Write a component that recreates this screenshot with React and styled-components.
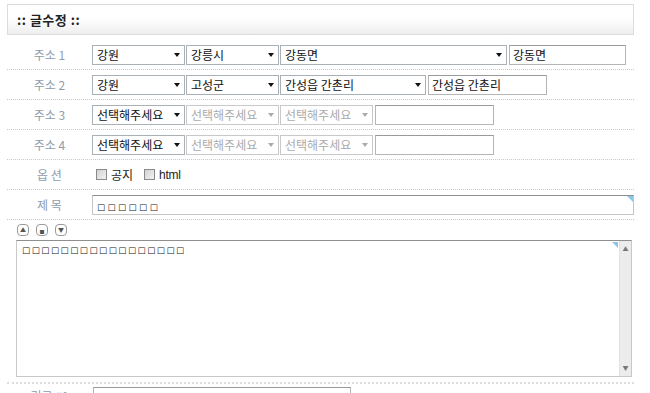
import React from 'react';
import styled, { createGlobalStyle } from 'styled-components';

const GlobalStyle = createGlobalStyle`
  body {
    margin: 0;
    background: #ffffff;
    font-family: 'Noto Sans CJK KR', 'Noto Sans', sans-serif;
    font-size: 12px;
    color: #333;
  }
`;

const addressRows = [
  { label: '주소 1', values: ['강원', '강릉시', '강동면'], widths: [93, 93, 227], input: '강동면', inputWidth: 117 },
  { label: '주소 2', values: ['강원', '고성군', '간성읍 간촌리'], widths: [93, 93, 146], input: '간성읍 간촌리', inputWidth: 119 },
  { label: '주소 3', values: ['선택해주세요', '선택해주세요', '선택해주세요'], widths: [93, 93, 93], input: '', inputWidth: 119, empty: true },
  { label: '주소 4', values: ['선택해주세요', '선택해주세요', '선택해주세요'], widths: [93, 93, 93], input: '', inputWidth: 119, empty: true },
];

const App = () => {
  return (
    <>
      <GlobalStyle />
      <Page>
        <TitleBox>
          <Title>:: 글수정 ::</Title>
        </TitleBox>

        <Form>
          {addressRows.map((row) => (
            <Row key={row.label}>
              <Label>{row.label}</Label>
              <Field>
                {row.values.map((v, i) => (
                  <SelectBox key={i} $width={row.widths[i]} $disabled={row.empty && i > 0}>
                    <SelectText>{v}</SelectText>
                    <Arrow $disabled={row.empty && i > 0} />
                  </SelectBox>
                ))}
                <TextInput $width={row.inputWidth}>{row.input}</TextInput>
              </Field>
            </Row>
          ))}

          <Row>
            <Label>옵 션</Label>
            <Field>
              <CheckLabel>
                <CheckBox />
                공지
              </CheckLabel>
              <CheckLabel $html>
                <CheckBox />
                html
              </CheckLabel>
            </Field>
          </Row>

          <Row>
            <Label>제 목</Label>
            <Field>
              <SubjectInput>
                <Tofu $spacing={2.5}>□□□□□□</Tofu>
                <CornerMark />
              </SubjectInput>
            </Field>
          </Row>
        </Form>

        <EditorTools>
          <ToolButton>▲</ToolButton>
          <ToolButton $small>■</ToolButton>
          <ToolButton>▼</ToolButton>
        </EditorTools>

        <TextArea>
          <TextContent>
            <Tofu $spacing={1.6}>□□□□□□□□□□□□□□□□□</Tofu>
          </TextContent>
          <CornerMark $inTextarea />
          <ScrollBar>
            <ScrollArrow>▲</ScrollArrow>
            <ScrollArrow>▼</ScrollArrow>
          </ScrollBar>
        </TextArea>

        <HeavySeparator />

        <Row $last>
          <Label>링크 #1</Label>
          <Field>
            <TextInput $width={258} />
          </Field>
        </Row>
      </Page>
    </>
  );
};

const Page = styled.div`
  width: 627px;
  padding: 4px 0 0 7px;
`;

const TitleBox = styled.div`
  height: 29px;
  border: 1px solid #dcdcdc;
  background: linear-gradient(to bottom, #ffffff 0%, #ffffff 45%, #eeeeee 100%);
  display: flex;
  align-items: center;
  padding-left: 9px;
`;

const Title = styled.h1`
  margin: 0;
  font-size: 13px;
  font-weight: bold;
  color: #222;
  letter-spacing: 0.5px;
`;

const Form = styled.div`
  margin-top: 5px;
`;

const Row = styled.div`
  display: flex;
  height: ${(p) => (p.$last ? '14px' : '29px')};
  border-bottom: ${(p) => (p.$last ? 'none' : '1px dotted #c8c8c8')};
  margin-top: ${(p) => (p.$last ? '3px' : '0')};
  align-items: ${(p) => (p.$last ? 'flex-start' : 'center')};
`;

const Label = styled.div`
  width: 85px;
  text-align: center;
  color: #8e9cab;
  font-size: 12px;
  flex-shrink: 0;
`;

const Field = styled.div`
  display: flex;
  align-items: center;
  gap: 1px;
`;

const SelectBox = styled.div`
  width: ${(p) => p.$width}px;
  height: 20px;
  box-sizing: border-box;
  border: 1px solid ${(p) => (p.$disabled ? '#c9c9c9' : '#a9b0b6')};
  background: #fff;
  display: flex;
  align-items: center;
  justify-content: space-between;
  padding: 0 4px 0 4px;
  color: ${(p) => (p.$disabled ? '#aaaaaa' : '#111')};
  font-size: 12px;
`;

const SelectText = styled.span`
  white-space: nowrap;
  line-height: 18px;
`;

const Arrow = styled.span`
  width: 0;
  height: 0;
  border-left: 3.5px solid transparent;
  border-right: 3.5px solid transparent;
  border-top: 4px solid ${(p) => (p.$disabled ? '#aaaaaa' : '#111')};
  flex-shrink: 0;
`;

const TextInput = styled.div`
  width: ${(p) => p.$width}px;
  height: 20px;
  box-sizing: border-box;
  border: 1px solid #b5b5b5;
  border-top-color: #9a9a9a;
  background: #fff;
  padding: 0 3px;
  line-height: 18px;
  font-size: 12px;
  color: #111;
  margin-left: 1px;
`;

const CheckLabel = styled.label`
  display: flex;
  align-items: center;
  gap: 4px;
  font-size: 12px;
  color: #222;
  margin-left: ${(p) => (p.$html ? '10px' : '4px')};
  font-family: ${(p) => (p.$html ? "'Liberation Sans', Arial, sans-serif" : 'inherit')};
  letter-spacing: ${(p) => (p.$html ? '-0.3px' : '0')};
`;

const CheckBox = styled.span`
  width: 11px;
  height: 11px;
  box-sizing: border-box;
  border: 1px solid #8a8a8a;
  background: linear-gradient(135deg, #d2d2d2, #f2f2f2);
  display: inline-block;
`;

const Tofu = styled.span`
  font-family: 'DejaVu Sans', sans-serif;
  font-size: 8.5px;
  letter-spacing: ${(p) => p.$spacing}px;
  color: #111;
`;

const SubjectInput = styled.div`
  position: relative;
  width: 542px;
  height: 20px;
  box-sizing: border-box;
  border: 1px solid #c4c4c4;
  border-top-color: #8f8f8f;
  padding: 0 4px;
  line-height: 17px;
`;

const CornerMark = styled.span`
  position: absolute;
  top: ${(p) => (p.$inTextarea ? '1px' : '0')};
  right: ${(p) => (p.$inTextarea ? '13px' : '0')};
  width: 0;
  height: 0;
  border-top: 6px solid #8cc6ea;
  border-left: 6px solid transparent;
`;

const EditorTools = styled.div`
  display: flex;
  gap: 7px;
  padding: 4px 0 0 10px;
  height: 15px;
`;

const ToolButton = styled.span`
  width: 12px;
  height: 12px;
  box-sizing: border-box;
  border: 1px solid #9a9a9a;
  border-radius: 4px;
  background: #fff;
  display: flex;
  align-items: center;
  justify-content: center;
  font-size: ${(p) => (p.$small ? '5px' : '6px')};
  color: #555;
  line-height: 1;
`;

const TextArea = styled.div`
  position: relative;
  margin: 1px 0 0 9px;
  width: 616px;
  height: 137px;
  box-sizing: border-box;
  border: 1px solid #c8c8c8;
  border-top-color: #8f8f8f;
  background: #fff;
`;

const TextContent = styled.div`
  padding: 1px 0 0 5px;
  line-height: 12px;
`;

const ScrollBar = styled.div`
  position: absolute;
  top: 0;
  right: 0;
  bottom: 0;
  width: 12px;
  background: #ececec;
  border-left: 1px solid #e0e0e0;
  display: flex;
  flex-direction: column;
  justify-content: space-between;
  align-items: center;
  padding: 5px 0;
  box-sizing: border-box;
`;

const ScrollArrow = styled.span`
  font-size: 6px;
  color: #777;
  line-height: 1;
`;

const HeavySeparator = styled.div`
  margin-top: 5px;
  height: 0;
  border-top: 2px dotted #dddddd;
`;

export default App;
